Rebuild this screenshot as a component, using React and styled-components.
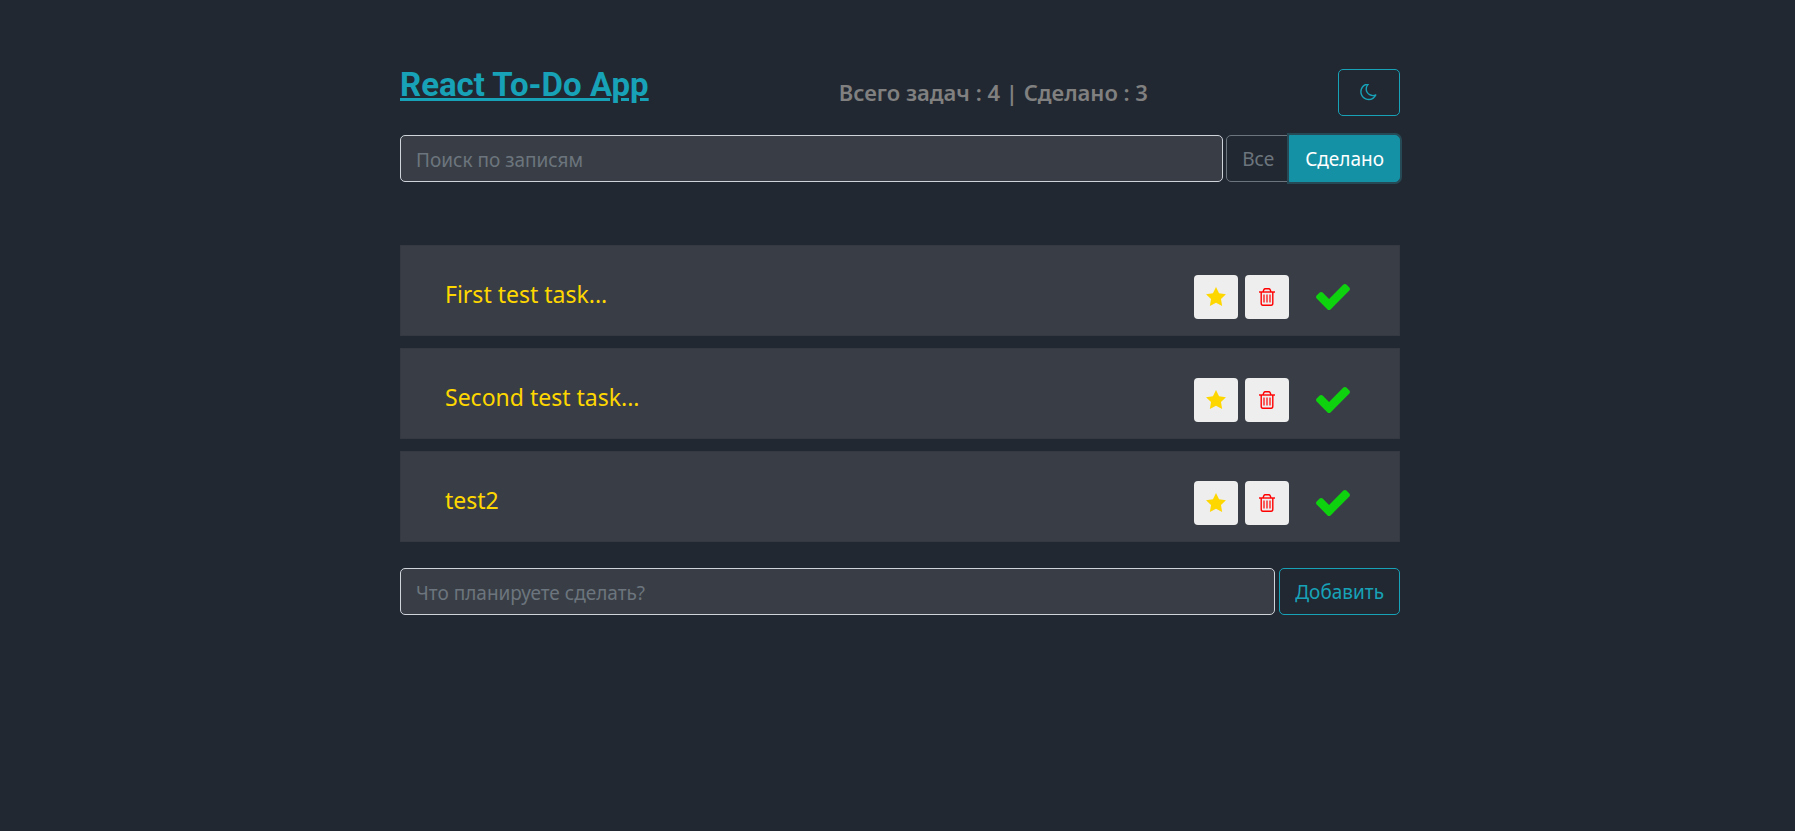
import React, { useState } from "react";
import styled, { createGlobalStyle, css } from "styled-components";

const GlobalStyle = createGlobalStyle`
  *, *::before, *::after { box-sizing: border-box; }
  body {
    margin: 0;
    min-height: 100vh;
    background: #222831;
    color: #808080;
    font: 19px/30px "Noto Sans", "Open Sans", sans-serif;
  }
  button, input { font: inherit; margin: 0; }
`;

const Page = styled.main`
  width: 100%;
  max-width: 1005px;
  margin: 0 auto;
  padding: 64px 0 64px 5px;
`;

const Header = styled.header`
  display: flex;
  justify-content: space-between;
  align-items: center;
  height: 56px;
  margin-bottom: 15px;
`;

const Title = styled.h1`
  margin: 0;
  padding-bottom: 14px;
  color: #17a2b8;
  font: 700 33px/40px Roboto, sans-serif;
  text-decoration: underline;
  text-decoration-thickness: 3px;
  text-underline-offset: 2px;
`;

const Summary = styled.h2`
  margin: 0;
  font-size: 22px;
  line-height: 30px;
  font-weight: 600;
`;

const control = css`
  height: 47px;
  border-radius: 5px;
  padding: 0 15px;
`;

const OutlineButton = styled.button`
  ${control}
  border: 1px solid #17a2b8;
  background: transparent;
  color: #17a2b8;
  min-width: ${(p) => (p.$wide ? 120 : 62)}px;
  display: flex;
  align-items: center;
  justify-content: center;
  cursor: pointer;
`;

const Bar = styled.form`
  display: flex;
  gap: ${(p) => p.$gap}px;
`;

const TextInput = styled.input`
  ${control}
  flex: 1;
  min-width: 0;
  padding-top: 2px;
  border: 1px solid #ced4da;
  background: #393e46;
  color: #eee;
  outline: none;
  &::placeholder { color: #6c757d; opacity: 1; }
`;

const Filters = styled.div`
  display: flex;
`;

const FilterButton = styled.button`
  ${control}
  border: 1px solid #6c757d;
  background: transparent;
  color: #6c757d;
  cursor: pointer;
  &:first-child { border-radius: 5px 0 0 5px; }
  &:last-child { border-radius: 0 5px 5px 0; margin-left: -1px; }
  ${(p) => p.$active && css`
    border-color: #1491a5;
    background: #1491a5;
    color: #fff;
    box-shadow: 0 0 0 2px #264b57;
  `}
`;

const TaskList = styled.ul`
  list-style: none;
  margin: 63px 0 26px;
  padding: 0;
  display: grid;
  gap: 12px;
`;

const TaskRow = styled.li`
  display: flex;
  align-items: center;
  height: 91px;
  padding: 12px 49px 0 44px;
  border: 1px solid #353a42;
  background: #393e46;
`;

const TaskText = styled.span`
  flex: 1;
  padding-bottom: 6px;
  color: #ffd700;
  font-size: 23px;
  line-height: 36px;
`;

const Actions = styled.div`
  display: flex;
  gap: 7px;
  margin-right: 27px;
`;

const IconButton = styled.button`
  width: 44px;
  height: 44px;
  padding: 0;
  border: 0;
  border-radius: 4px;
  background: #eee;
  color: ${(p) => p.$color};
  display: grid;
  place-items: center;
  cursor: pointer;
`;

const Icon = styled.svg`
  display: block;
  fill: currentColor;
`;

const LineIcon = styled(Icon)`
  fill: none;
  stroke: currentColor;
`;

const Check = styled(Icon)`
  color: #0fd20f;
`;

const MoonIcon = () => (
  <Icon width="17" height="17" viewBox="0 128 1500 1536" aria-hidden="true">
    <path d="M1262 1233q-54 9-110 9-182 0-337-90t-245-245-90-337q0-192 104-357-201 60-328.500 229t-127.500 384q0 130 51 248.500t136.500 204 204 136.500 248.500 51q144 0 273.500-61.500t220.500-171.500zM1465 1148q-94 203-283.500 324.500t-413.500 121.500q-156 0-298-61t-245-164-164-245-61-298q0-153 57.500-292.500t156-241.500 235.500-164.500 290-68.500q44-2 61 39 18 41-15 72-86 78-131.500 181.500t-45.500 218.500q0 148 73 273t198 198 273 73q118 0 228-51 41-18 72 13 14 14 17.500 34t-4.500 38z" />
  </Icon>
);

const StarIcon = () => (
  <Icon width="20" height="19" viewBox="0 0 1664 1587" aria-hidden="true">
    <path d="M832 0l257 521 575 84-416 405 98 572-514-270-514 270 98-572L0 605l575-84z" />
  </Icon>
);

const TrashIcon = () => (
  <LineIcon width="16" height="18" viewBox="0 0 16 18" aria-hidden="true">
    <path d="M0 4h16" strokeWidth="1.4" />
    <path d="M4 4l.8-2.200q.4-1 1.500-1h3.400q1.100 0 1.500 1L12 4M2.200 4v11.300q0 2 1.700 2h8.200q1.700 0 1.700-2V4" strokeWidth="1.4" />
    <path d="M5 6.500v8M8 6.500v8M11 6.500v8" strokeWidth="1.200" />
  </LineIcon>
);

const CheckIcon = () => (
  <Check width="34" height="26" viewBox="0 0 1550 1188" role="img" aria-label="Сделано">
    <path d="M1550 232q0 40-28 68l-724 724-136 136q-28 28-68 28t-68-28l-136-136-362-362q-28-28-28-68t28-68l136-136q28-28 68-28t68 28l294 295 656-657q28-28 68-28t68 28l136 136q28 28 28 68z" />
  </Check>
);

const tasks = ["First test task...", "Second test task...", "test2"];

export default function App() {
  const [filter, setFilter] = useState("done");
  return (
    <Page>
      <GlobalStyle />
      <Header>
        <Title>React To-Do App</Title>
        <Summary>Всего задач : 4 | Сделано : 3</Summary>
        <OutlineButton type="button" aria-label="Сменить тему"><MoonIcon /></OutlineButton>
      </Header>
      <Bar $gap={3} role="search" onSubmit={(e) => e.preventDefault()}>
        <TextInput type="text" aria-label="Поиск по записям" placeholder="Поиск по записям" />
        <Filters>
          <FilterButton type="button" $active={filter === "all"} onClick={() => setFilter("all")}>Все</FilterButton>
          <FilterButton type="button" $active={filter === "done"} onClick={() => setFilter("done")}>Сделано</FilterButton>
        </Filters>
      </Bar>
      <TaskList>
        {tasks.map((task) => (
          <TaskRow key={task}>
            <TaskText>{task}</TaskText>
            <Actions>
              <IconButton type="button" $color="#ffd700" aria-label="Важное"><StarIcon /></IconButton>
              <IconButton type="button" $color="#ff0000" aria-label="Удалить"><TrashIcon /></IconButton>
            </Actions>
            <CheckIcon />
          </TaskRow>
        ))}
      </TaskList>
      <Bar $gap={4} onSubmit={(e) => e.preventDefault()}>
        <TextInput type="text" aria-label="Что планируете сделать?" placeholder="Что планируете сделать?" />
        <OutlineButton type="submit" $wide>Добавить</OutlineButton>
      </Bar>
    </Page>
  );
}
